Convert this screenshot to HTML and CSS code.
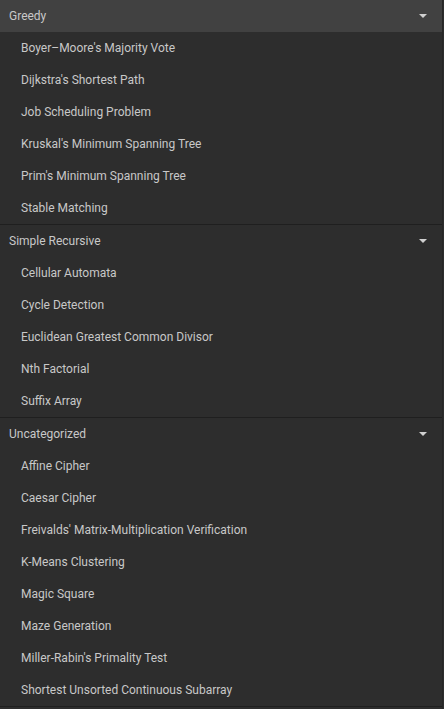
FILE: index.html
```html
<!DOCTYPE html>
<html>
<head>
<meta charset="utf-8">
<link rel="stylesheet" href="styles.css">
</head>
<body>
<div class="list">
  <div class="cat open">
    <div class="cat-head"><span>Greedy</span><span class="caret"></span></div>
    <div class="item">Boyer–Moore's Majority Vote</div>
    <div class="item">Dijkstra's Shortest Path</div>
    <div class="item">Job Scheduling Problem</div>
    <div class="item">Kruskal's Minimum Spanning Tree</div>
    <div class="item">Prim's Minimum Spanning Tree</div>
    <div class="item">Stable Matching</div>
  </div>
  <div class="cat">
    <div class="cat-head"><span>Simple Recursive</span><span class="caret"></span></div>
    <div class="item">Cellular Automata</div>
    <div class="item">Cycle Detection</div>
    <div class="item">Euclidean Greatest Common Divisor</div>
    <div class="item">Nth Factorial</div>
    <div class="item">Suffix Array</div>
  </div>
  <div class="cat">
    <div class="cat-head"><span>Uncategorized</span><span class="caret"></span></div>
    <div class="item">Affine Cipher</div>
    <div class="item">Caesar Cipher</div>
    <div class="item">Freivalds' Matrix-Multiplication Verification</div>
    <div class="item">K-Means Clustering</div>
    <div class="item">Magic Square</div>
    <div class="item">Maze Generation</div>
    <div class="item">Miller-Rabin's Primality Test</div>
    <div class="item">Shortest Unsorted Continuous Subarray</div>
  </div>
</div>
</body>
</html>
```
FILE: styles.css
```css
html, body {
  margin: 0;
  padding: 0;
  background: #2d2d2d;
}
body {
  font-family: Roboto, "Liberation Sans", sans-serif;
  font-size: 12px;
  color: #c8c8c8;
}
.list {
  width: 442px;
  border-right: 1px solid #262626;
  height: 709px;
  overflow: hidden;
}
.cat {
  border-bottom: 1px solid #1f1f1f;
}
.cat-head {
  height: 32px;
  display: flex;
  align-items: center;
  justify-content: space-between;
  padding: 0 15px 0 9px;
  background: #2d2d2d;
}
.cat.open .cat-head {
  background: #414141;
}
.item {
  height: 32px;
  display: flex;
  align-items: center;
  padding-left: 21px;
}
.caret {
  width: 0;
  height: 0;
  border-left: 4px solid transparent;
  border-right: 4px solid transparent;
  border-top: 4px solid #d0d0d0;
}
```
